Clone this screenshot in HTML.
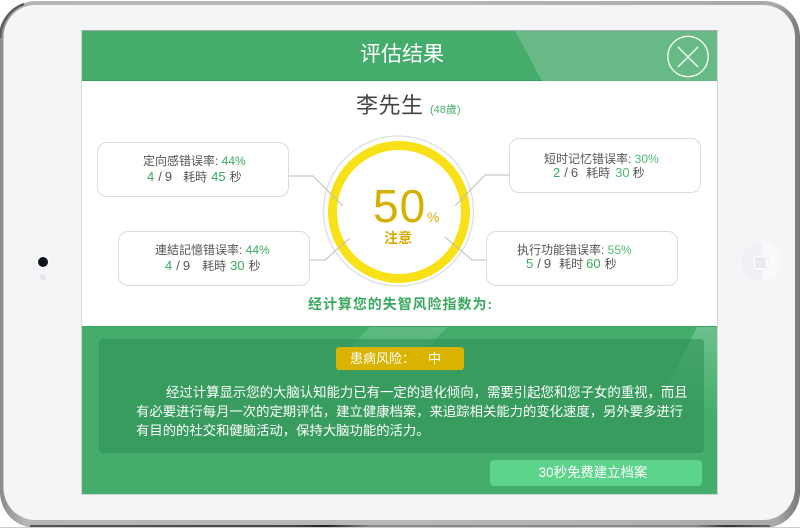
<!DOCTYPE html>
<html lang="zh"><head><meta charset="utf-8"><style>
html,body{margin:0;padding:0;background:#fff}
#s{position:relative;width:800px;height:530px;overflow:hidden;background:#fff;font-family:"Liberation Sans","Noto Sans CJK SC",sans-serif}
#s div{position:absolute;box-sizing:border-box}
.box{background:#fff;border:1px solid #dcdcdc;border-radius:10px;width:192px;height:55px}
.t{white-space:nowrap;font-size:12px;line-height:14px;color:#555;text-align:left}
.g{color:#3aa85f}
.n{font-size:13px;color:#3aa85f}
.d{font-size:13px;color:#555}
</style></head><body><div id="s">
<svg style="position:absolute;left:0;top:0" width="800" height="530">
<defs>
<linearGradient id="fr" x1="0" x2="1" y1="0" y2="0"><stop offset="0" stop-color="#8a8a8a"/><stop offset=".03" stop-color="#b5b5b5"/><stop offset=".5" stop-color="#b8b8b8"/><stop offset=".97" stop-color="#aaa"/><stop offset="1" stop-color="#777"/></linearGradient>
<linearGradient id="bt" x1="0" x2="1" y1="0" y2="0"><stop offset="0" stop-color="#555"/><stop offset=".36" stop-color="#444"/><stop offset=".4" stop-color="#222"/><stop offset=".46" stop-color="#888"/><stop offset=".9" stop-color="#888"/><stop offset=".94" stop-color="#333"/><stop offset="1" stop-color="#666"/></linearGradient>
</defs>
<rect x="0" y="1" width="800" height="527" rx="36" fill="url(#fr)"/>
<path d="M0 527H800V528H0Z" fill="#ccc"/>
<path d="M0 38A36 36 0 0 1 24 4" fill="none" stroke="#5c5c5c" stroke-width="2.5"/>
<rect x="30" y="525" width="740" height="2" fill="url(#bt)"/>
<rect x="3.5" y="5" width="791.5" height="515" rx="32" fill="#f4f5f7"/>
</svg>
<div style="left:38px;top:257px;width:10px;height:10px;border-radius:50%;background:#10131c;box-shadow:0 0 0 1px #fff"></div>
<div style="left:40px;top:274px;width:6px;height:6px;border-radius:50%;background:#e6e7ea"></div>
<div style="left:741px;top:242px;width:40px;height:40px;border-radius:50%;background:linear-gradient(90deg,#f0f1f4 0 53%,#f8f9fb 53%)"></div>
<div style="left:753px;top:255px;width:15px;height:15px;border:2px solid #fafafa;border-radius:4px;background:#eaebf0;box-shadow:0 0 1px #ccc"></div>

<div style="left:81px;top:30px;width:637px;height:465px;background:#fff;border:1px solid #d4d4d4;border-top:1px solid #aaa"></div>
<div style="left:82px;top:31px;width:635px;height:50px;background:#44ad6b;border-bottom:1px solid #2fa45c"></div>
<svg style="position:absolute;left:82px;top:31px" width="635" height="50"><path d="M433 0H635V50H460Z" fill="#67b985"/></svg>
<div class="t" style="left:360px;top:40px;font-size:21px;line-height:30px;color:#fff">评估结果</div>
<svg style="position:absolute;left:666px;top:35px" width="44" height="44"><circle cx="22" cy="21.5" r="20.2" fill="none" stroke="#fff" stroke-width="1.3"/><path d="M12 12L32 32M32 12L12 32" stroke="#fff" stroke-width="1.3"/></svg>

<div class="t" style="left:356px;top:92px;font-size:22px;line-height:28px;color:#444;letter-spacing:.5px">李先生</div>
<div class="t" style="left:430px;top:103px;font-size:11px;line-height:14px;color:#4cae70">(48歲)</div>

<svg style="position:absolute;left:0;top:0" width="800" height="530" fill="none">
<circle cx="398.5" cy="211" r="75" stroke="#dedede" stroke-width="1.3"/>
<circle cx="399" cy="212" r="66.5" stroke="#f8e217" stroke-width="9"/>
<path d="M289 176H313L343 206M310 260H325L350 238M455 206L485 175H509M445 237L472 260H486" stroke="#bdbdbd" stroke-width="1"/>
</svg>

<div class="box" style="left:97px;top:142px"></div>
<div class="t" style="left:143px;top:154px">定向感错误率: <span class="g">44%</span></div>
<div class="t" style="left:147px;top:170px"><span class="n">4</span><span class="d" style="margin-left:4px">/</span><span class="d" style="margin-left:3px">9</span><span style="margin-left:11px">耗時</span><span class="n" style="margin-left:4px">45</span><span style="margin-left:4px">秒</span></div>

<div class="box" style="left:118px;top:231px"></div>
<div class="t" style="left:155px;top:243px">連結記憶错误率: <span class="g">44%</span></div>
<div class="t" style="left:165px;top:259px"><span class="n">4</span><span class="d" style="margin-left:4px">/</span><span class="d" style="margin-left:3px">9</span><span style="margin-left:12px">耗時</span><span class="n" style="margin-left:4px">30</span><span style="margin-left:4px">秒</span></div>

<div class="box" style="left:509px;top:138px"></div>
<div class="t" style="left:544px;top:152px">短时记忆错误率: <span class="g" style="color:#4cb877">30%</span></div>
<div class="t" style="left:553px;top:166px"><span class="n">2</span><span class="d" style="margin-left:4px">/</span><span class="d" style="margin-left:3px">6</span><span style="margin-left:8px">耗時</span><span class="n" style="margin-left:5px;color:#4cb877">30</span><span style="margin-left:3px">秒</span></div>

<div class="box" style="left:486px;top:231px"></div>
<div class="t" style="left:517px;top:243px">执行功能错误率: <span class="g" style="color:#4cb877">55%</span></div>
<div class="t" style="left:526px;top:257px"><span class="n">5</span><span class="d" style="margin-left:4px">/</span><span class="d" style="margin-left:3px">9</span><span style="margin-left:8px">耗时</span><span class="n" style="margin-left:3px">60</span><span style="margin-left:4px">秒</span></div>

<div class="t" style="left:373px;top:181px;font-size:46px;line-height:50px;color:#d6b000;letter-spacing:1px">50</div>
<div class="t" style="left:427px;top:208px;font-size:14px;line-height:18px;color:#d6b000">%</div>
<div class="t" style="left:384px;top:229px;font-size:14px;line-height:18px;color:#d6a800;font-weight:bold">注意</div>
<div class="t" style="left:308px;top:295px;font-size:14px;line-height:18px;color:#3aa85f;font-weight:bold;letter-spacing:.95px">经计算您的失智风险指数为:</div>

<div style="left:82px;top:326px;width:635px;height:168px;background:#44ad6b;border-top:1px solid #36a760"></div>
<svg style="position:absolute;left:82px;top:327px" width="635" height="167">
<defs>
<linearGradient id="a" x1="0" x2="0" y1="0" y2="1"><stop offset="0" stop-color="#60bb83"/><stop offset="1" stop-color="#44ad6b"/></linearGradient>
<linearGradient id="b" x1="0" x2="0" y1="0" y2="1"><stop offset="0" stop-color="#6cc08c"/><stop offset="1" stop-color="#44ad6b"/></linearGradient>
</defs>
<path d="M288 0H365L318 50H241Z" fill="url(#a)"/>
<path d="M615 0H635V90H570Z" fill="url(#b)"/>
</svg>
<div style="left:99px;top:339px;width:605px;height:114px;background:rgba(46,145,85,.6);border-radius:4px"></div>
<div style="left:336px;top:347px;width:128px;height:23px;background:#dab300;border-radius:3px"></div>
<div class="t" style="left:350px;top:350px;font-size:13px;line-height:17px;color:#fff">患病风险：</div>
<div class="t" style="left:428px;top:350px;font-size:13px;line-height:17px;color:#fff">中</div>
<div class="t" style="left:166px;top:383px;font-size:13.38px;line-height:19px;color:#fff">经过计算显示您的大脑认知能力已有一定的退化倾向，需要引起您和您子女的重视，而且</div>
<div class="t" style="left:136px;top:402px;font-size:13.35px;line-height:19px;color:#fff">有必要进行每月一次的定期评估，建立健康档案，来追踪相关能力的变化速度，另外要多进行</div>
<div class="t" style="left:136px;top:421px;font-size:13.35px;line-height:19px;color:#fff">有目的的社交和健脑活动，保持大脑功能的活力。</div>
<div class="t" style="left:490px;top:460px;width:212px;height:26px;background:#5dd48b;border-radius:4px;color:#fff;font-size:13.4px;line-height:26px;text-align:center;padding-right:6px">30秒免费建立档案</div>
</div></body></html>
